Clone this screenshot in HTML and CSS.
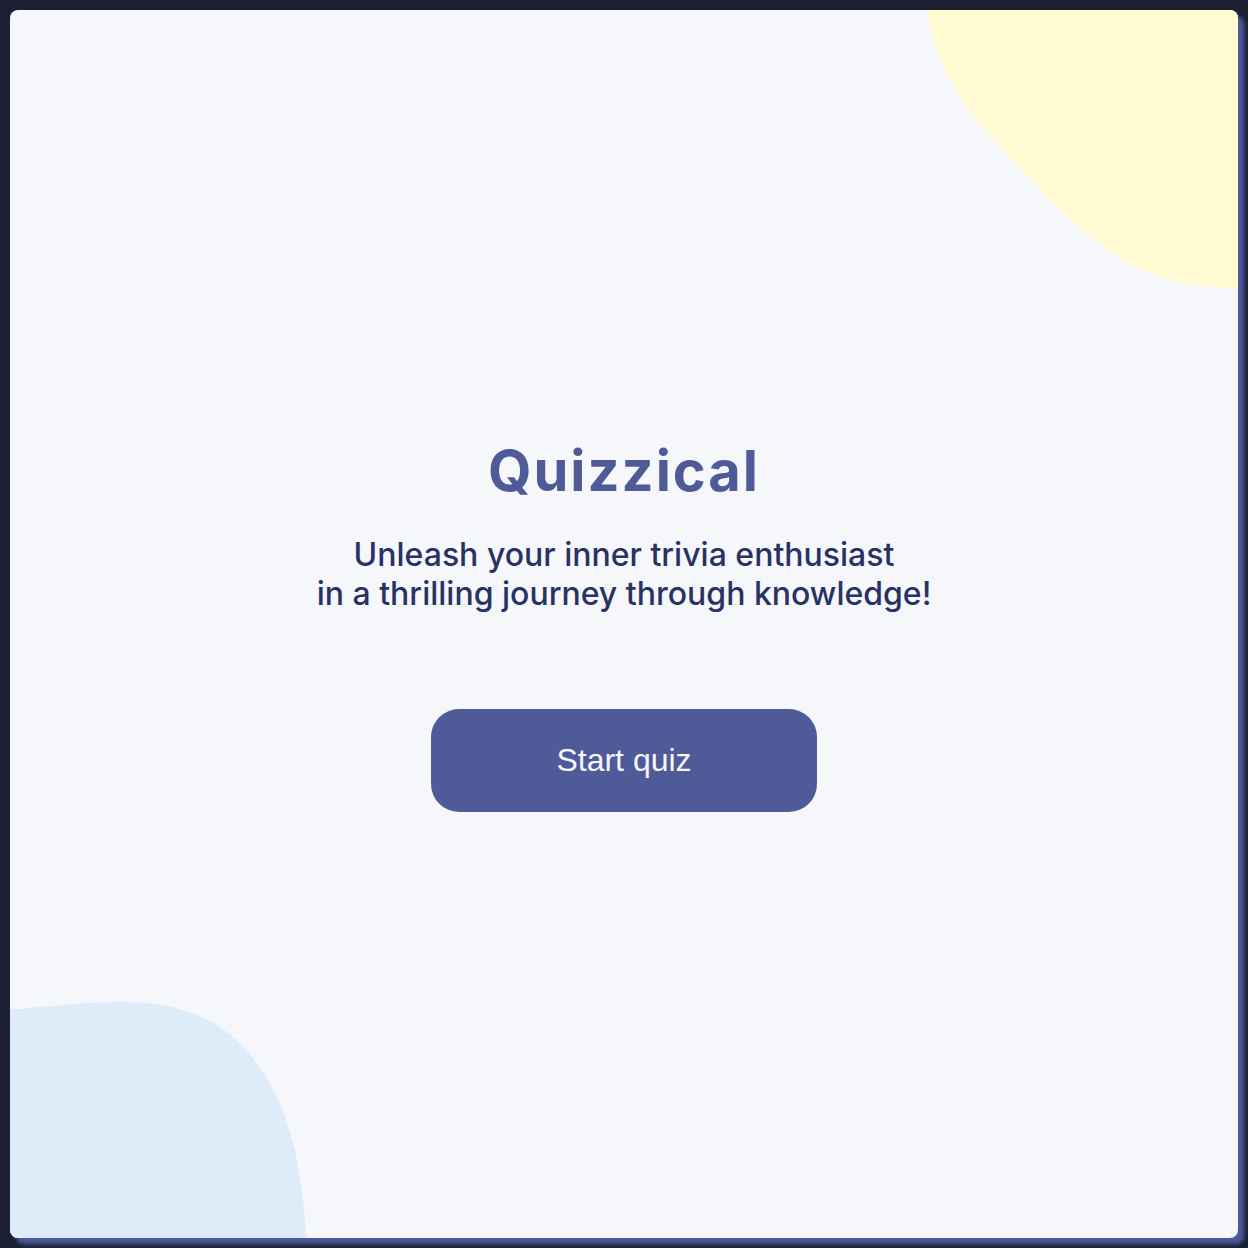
FILE: index.html
```html
<!DOCTYPE html>
<html lang="en">
<head>
<meta charset="utf-8">
<title>Quizzical</title>
<link rel="stylesheet" href="styles.css">
</head>
<body>
<main class="card">
  <svg class="blob blob-yellow" viewBox="0 0 320 280" preserveAspectRatio="none" aria-hidden="true">
    <path d="M0 0 H320 V278 C280 276 250 272 220 258 C180 240 140 205 110 172 C80 140 50 115 30 80 C14 55 5 30 0 0 Z" fill="#FFFAD1"/>
  </svg>
  <svg class="blob blob-blue" viewBox="0 0 300 240" preserveAspectRatio="none" aria-hidden="true">
    <path d="M0 8 C40 4 80 0 110 0 C160 0 200 12 230 42 C270 85 290 140 296 236 L296 240 H0 Z" fill="#DEEBF8"/>
  </svg>
  <section class="intro">
    <h1 class="title">Quizzical</h1>
    <p class="subtitle">Unleash your inner trivia enthusiast<br>in a thrilling journey through knowledge!</p>
    <button class="start-btn" type="button">Start quiz</button>
  </section>
</main>
</body>
</html>
```

FILE: styles.css
```css
html, body {
  margin: 0;
  padding: 0;
}

body {
  background: #1B2032;
  padding: 10px;
  box-sizing: border-box;
  min-height: 100vh;
  display: flex;
  font-family: "Inter", "Liberation Sans", sans-serif;
}

.card {
  position: relative;
  overflow: hidden;
  flex: 1;
  height: 1228px;
  background: #F5F7FB;
  border-radius: 8px;
  box-shadow: 6px 6px 4px #4D5B9E;
  display: flex;
  align-items: center;
  justify-content: center;
}

.blob {
  position: absolute;
  display: block;
}

.blob-yellow {
  top: 0;
  right: 0;
  width: 311px;
  height: 281px;
}

.blob-blue {
  left: 0;
  bottom: 0;
  width: 300px;
  height: 236px;
}

.intro {
  position: relative;
  display: flex;
  flex-direction: column;
  align-items: center;
  text-align: center;
}

.title {
  margin: 0;
  font-family: "Inter", sans-serif;
  font-weight: 700;
  font-size: 56px;
  line-height: 68px;
  letter-spacing: 2px;
  color: #4F5A98;
}

.subtitle {
  margin: 30px 0 0;
  font-family: "Inter", sans-serif;
  font-weight: 500;
  font-size: 32px;
  line-height: 39px;
  color: #293264;
}

.start-btn {
  margin-top: 96px;
  width: 386px;
  height: 103px;
  border: none;
  border-radius: 28px;
  background: #4F5A98;
  color: #F5F7FB;
  font-family: "Liberation Sans", Arial, sans-serif;
  font-size: 32px;
  cursor: pointer;
}
```
